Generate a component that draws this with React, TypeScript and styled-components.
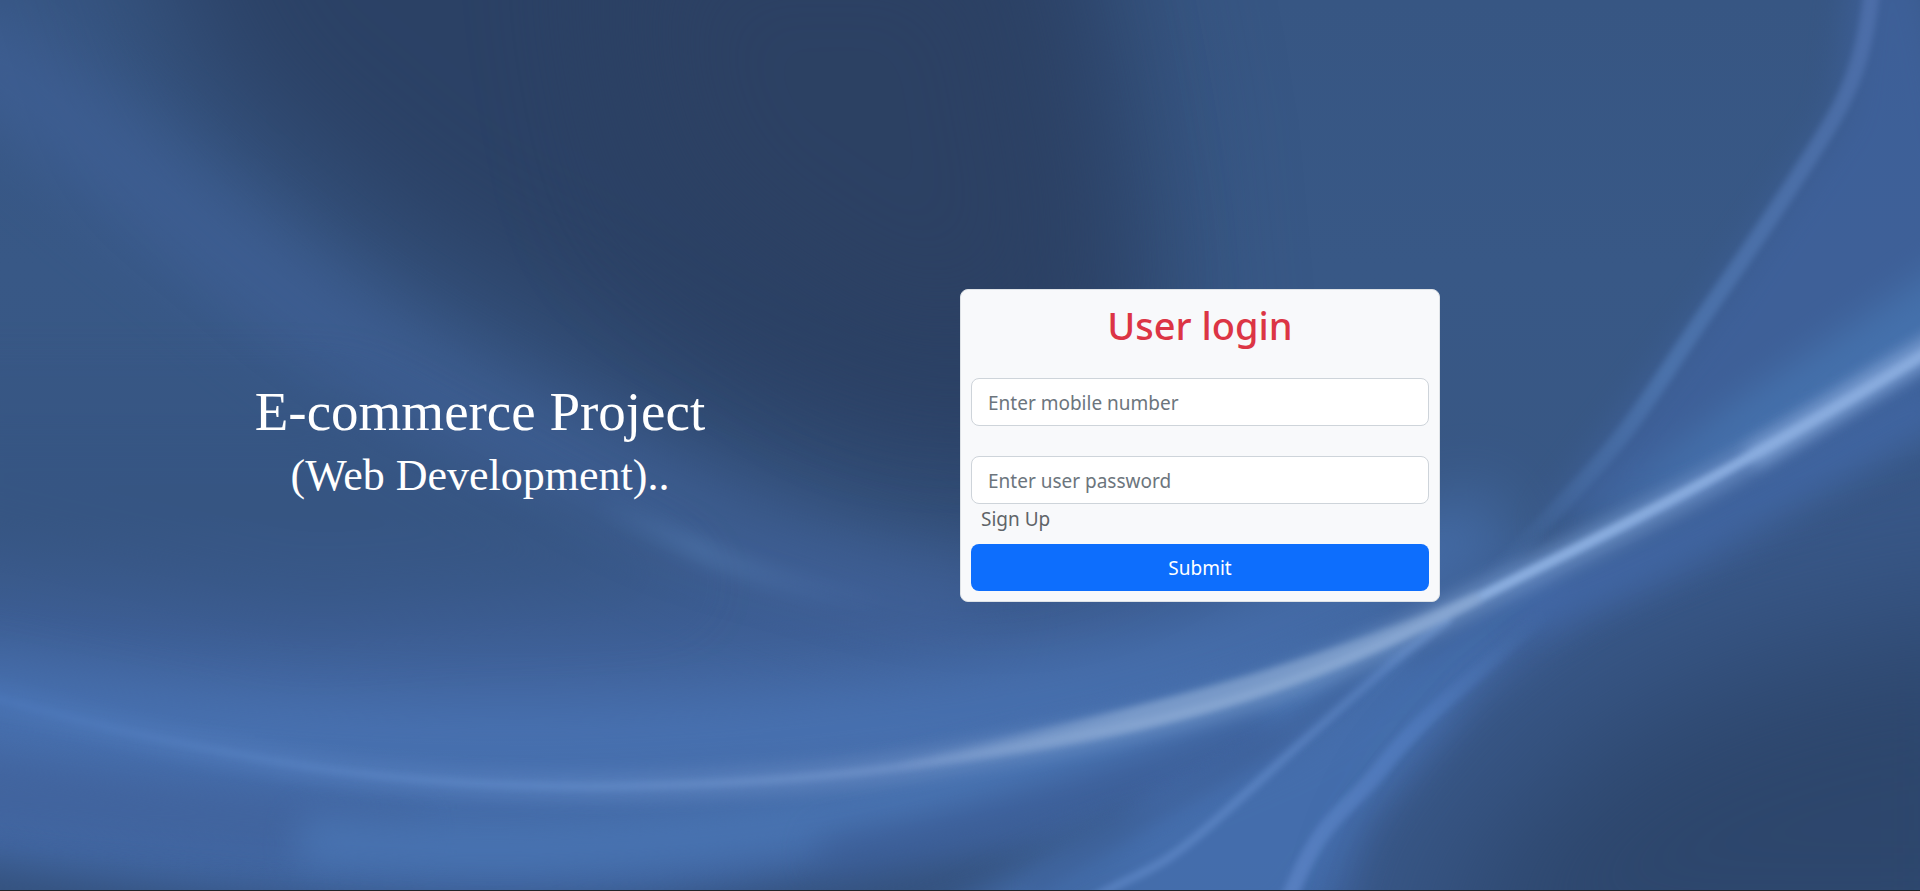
import React from "react";
import styled, { createGlobalStyle } from "styled-components";

const GlobalStyle = createGlobalStyle`
  *, *::before, *::after { box-sizing: border-box; }
  body {
    margin: 0;
    background: #212529;
    color: #212529;
    font-family: "Segoe UI", "Noto Sans", "Open Sans", sans-serif;
    font-size: 19px;
    line-height: 30px;
  }
`;

const Page = styled.main`
  display: grid;
  grid-template: minmax(calc(100vh - 1px), auto) / minmax(0, 1fr);
  overflow: hidden;
`;

const Backdrop = styled.svg`
  grid-area: 1 / 1;
  width: 100%;
  height: 100%;
  min-height: 0;
  contain: size;
  display: block;
`;

const Content = styled.div`
  grid-area: 1 / 1;
  z-index: 1;
  display: grid;
  grid-template-columns: 1fr 1fr;
  align-items: center;
`;

const Intro = styled.header`
  padding-bottom: 8px;
  text-align: center;
  color: #fff;
  font-family: Georgia, "Liberation Serif", serif;
`;

const Title = styled.h1`
  margin: 0 0 10px;
  font-size: 55px;
  font-weight: 400;
  line-height: 60px;
`;

const Subtitle = styled.p`
  margin: 0;
  font-size: 44px;
  line-height: 48px;
`;

const Card = styled.form`
  width: 50%;
  min-width: 320px;
  padding: 10px;
  display: flex;
  flex-direction: column;
  background: #f8f9fb;
  border: 1px solid #dee2e6;
  border-radius: 8px;
`;

const CardTitle = styled.h2`
  margin: 0 0 28px;
  text-align: center;
  color: #dc3545;
  font-size: 38px;
  font-weight: 500;
  line-height: 50px;
`;

const Field = styled.input<{ $spaced?: boolean }>`
  width: 100%;
  height: 48px;
  margin-bottom: ${(p) => (p.$spaced ? "30px" : "0")};
  padding: 9px 16px 7px;
  border: 1px solid #ced4da;
  border-radius: 8px;
  background: #fff;
  color: #212529;
  font: inherit;
  &::placeholder { color: #6c757d; opacity: 1; }
`;

const SignUp = styled.a`
  align-self: flex-start;
  margin: 0 10px 10px;
  color: #5f6468;
  text-decoration: none;
`;

const Submit = styled.button`
  height: 47px;
  padding: 2px 16px 0;
  border: 0;
  border-radius: 8px;
  background: #0d6efd;
  color: #fff;
  font: inherit;
  cursor: pointer;
`;

const RIBBON =
  "M-20 694C50 712 120 734 275 761S580 790 720 783S930 763 1021 747S1200 712 1266 690S1420 627 1480 597S1650 516 1725 472S1860 392 1950 338";

function Waves() {
  return (
    <Backdrop viewBox="0 0 1920 890" preserveAspectRatio="none" aria-hidden="true">
      <defs>
        {[3, 8, 18, 35, 70].map((n) => (
          <filter key={n} id={`b${n}`} colorInterpolationFilters="sRGB" filterUnits="userSpaceOnUse" x="-300" y="-300" width="2520" height="1490">
            <feGaussianBlur stdDeviation={n} />
          </filter>
        ))}
        <linearGradient id="base" x1="0" y1="0" x2="0" y2="1">
          <stop offset="0" stopColor="#375683" />
          <stop offset=".3" stopColor="#385886" />
          <stop offset=".58" stopColor="#385784" />
          <stop offset=".7" stopColor="#3d5e94" />
          <stop offset=".82" stopColor="#4469a5" />
          <stop offset="1" stopColor="#4065a0" />
        </linearGradient>
        <linearGradient id="ribbon" gradientUnits="userSpaceOnUse" x1="0" y1="0" x2="1920" y2="0">
          <stop offset="0" stopColor="#4c77b9" />
          <stop offset=".3" stopColor="#628bc8" />
          <stop offset=".48" stopColor="#7697cc" />
          <stop offset=".68" stopColor="#84a5d0" />
          <stop offset=".83" stopColor="#8fb4e8" />
          <stop offset="1" stopColor="#7f9fd5" />
        </linearGradient>
        <linearGradient id="strandUp" gradientUnits="userSpaceOnUse" x1="1872" y1="0" x2="1480" y2="590">
          <stop offset="0" stopColor="#5778b5" />
          <stop offset=".6" stopColor="#5580bb" />
          <stop offset="1" stopColor="#5580bb" stopOpacity="0" />
        </linearGradient>
        <linearGradient id="strandDown" gradientUnits="userSpaceOnUse" x1="1540" y1="600" x2="1290" y2="890">
          <stop offset="0" stopColor="#5580c4" stopOpacity="0" />
          <stop offset=".5" stopColor="#5580c4" />
          <stop offset="1" stopColor="#6289cb" />
        </linearGradient>
        <linearGradient id="fan" gradientUnits="userSpaceOnUse" x1="880" y1="0" x2="1140" y2="0">
          <stop offset="0" stopColor="#94b0d7" stopOpacity="0" />
          <stop offset="1" stopColor="#94b0d7" />
        </linearGradient>
        <linearGradient id="glint" gradientUnits="userSpaceOnUse" x1="590" y1="0" x2="900" y2="0">
          <stop offset="0" stopColor="#4f76ab" stopOpacity="0" />
          <stop offset=".35" stopColor="#4f76ab" />
          <stop offset="1" stopColor="#4a6ca8" stopOpacity="0" />
        </linearGradient>
      </defs>
      <rect width="1920" height="890" fill="url(#base)" />

      <path d="M110 -200H1060L1130 120L1160 440L1010 520L720 440L400 260L200 90Z" fill="#2b4165" filter="url(#b70)" />
      <path d="M600 -100H1020L1100 340L900 370L650 200Z" fill="#2d4163" opacity=".7" filter="url(#b70)" />
      <path d="M-60 30C130 150 300 340 520 440S760 560 980 620" fill="none" stroke="#41629a" strokeWidth="90" opacity=".65" filter="url(#b35)" />
      <path d="M-80 400H350L700 590L300 620L-80 540Z" fill="#355482" opacity=".5" filter="url(#b35)" />
      <path d="M600 508C680 530 740 590 900 600" fill="none" stroke="url(#glint)" strokeWidth="24" opacity=".55" filter="url(#b8)" />
      <path d="M-60 690C250 750 550 770 900 720S1250 630 1500 520" fill="none" stroke="#4a76b7" strokeWidth="70" opacity=".75" filter="url(#b35)" />

      <path d="M1920 -60H1860L1840 110L1720 290L1540 530L1700 500L2000 340Z" fill="#40639f" opacity=".75" filter="url(#b18)" />
      <path d="M1560 540L1740 400L1980 240V330L1720 465Z" fill="#497cb9" opacity=".6" filter="url(#b18)" />

      <path d="M-80 745L200 790L420 810V850L-80 820Z" fill="#41629b" opacity=".6" filter="url(#b18)" />
      <path d="M-80 950V850C170 895 500 925 750 885S1050 850 1150 795L1090 950Z" fill="#324e77" opacity=".8" filter="url(#b18)" />
      <path d="M300 840C550 860 780 840 950 790S1250 715 1400 650" fill="none" stroke="#4b78b7" strokeWidth="50" opacity=".75" filter="url(#b18)" />
      <path d="M820 856C980 830 1130 785 1270 725" fill="none" stroke="#385890" strokeWidth="34" opacity=".65" filter="url(#b18)" />
      <path d="M900 940L1060 850L1290 750L1500 600L1560 580L1430 740L1290 930Z" fill="#456fae" opacity=".85" filter="url(#b18)" />
      <path d="M1330 960L1370 830L1480 700L1600 605L1750 545L2000 420V960Z" fill="#385787" filter="url(#b18)" />
      <path d="M1420 1000L1480 850L1600 730L1760 660L2050 600V1000Z" fill="#2d466c" filter="url(#b70)" />
      <path d="M1520 610C1690 550 1800 470 1950 395" fill="none" stroke="#436aab" strokeWidth="54" opacity=".75" filter="url(#b18)" />

      <path d="M1872 -10C1866 45 1856 75 1841 105S1770 220 1719 294S1650 400 1621 437S1520 550 1450 615" fill="none" stroke="url(#strandUp)" strokeWidth="16" opacity=".6" filter="url(#b3)" />
      <path d="M1450 618C1370 675 1300 745 1225 812S1150 865 1090 900" fill="none" stroke="#6790cf" strokeWidth="9" opacity=".55" filter="url(#b3)" />
      <path d="M1380 650C1300 745 1160 800 1030 890" fill="none" stroke="#3d6098" strokeWidth="18" opacity=".5" filter="url(#b8)" />
      <path d="M1560 600C1460 690 1420 718 1382 767S1325 810 1288 900" fill="none" stroke="url(#strandDown)" strokeWidth="16" opacity=".65" filter="url(#b3)" />

      <path d={RIBBON} fill="none" stroke="url(#ribbon)" strokeWidth="30" opacity=".45" filter="url(#b8)" />
      <path d={RIBBON} fill="none" stroke="url(#ribbon)" strokeWidth="8" opacity=".65" filter="url(#b3)" />
      <path d="M900 766C1130 738 1300 690 1480 597C1320 668 1150 714 900 766Z" fill="url(#fan)" stroke="url(#fan)" strokeWidth="12" opacity=".55" filter="url(#b3)" />
      <path d="M1480 597C1640 515 1800 435 1950 338" fill="none" stroke="#9bbdec" strokeWidth="8" opacity=".6" filter="url(#b3)" />
      <path d="M1750 458C1830 412 1880 375 1950 338" fill="none" stroke="#8cafe0" strokeWidth="21" opacity=".6" filter="url(#b8)" />
    </Backdrop>
  );
}

export default function App() {
  return (
    <>
      <GlobalStyle />
      <Page>
        <Waves />
        <Content>
          <Intro>
            <Title>E-commerce Project</Title>
            <Subtitle>(Web Development)..</Subtitle>
          </Intro>
          <Card onSubmit={(e) => e.preventDefault()}>
            <CardTitle>User login</CardTitle>
            <Field $spaced type="tel" placeholder="Enter mobile number" aria-label="Mobile number" />
            <Field type="password" placeholder="Enter user password" aria-label="User password" />
            <SignUp href="#signup">Sign Up</SignUp>
            <Submit type="submit">Submit</Submit>
          </Card>
        </Content>
      </Page>
    </>
  );
}
